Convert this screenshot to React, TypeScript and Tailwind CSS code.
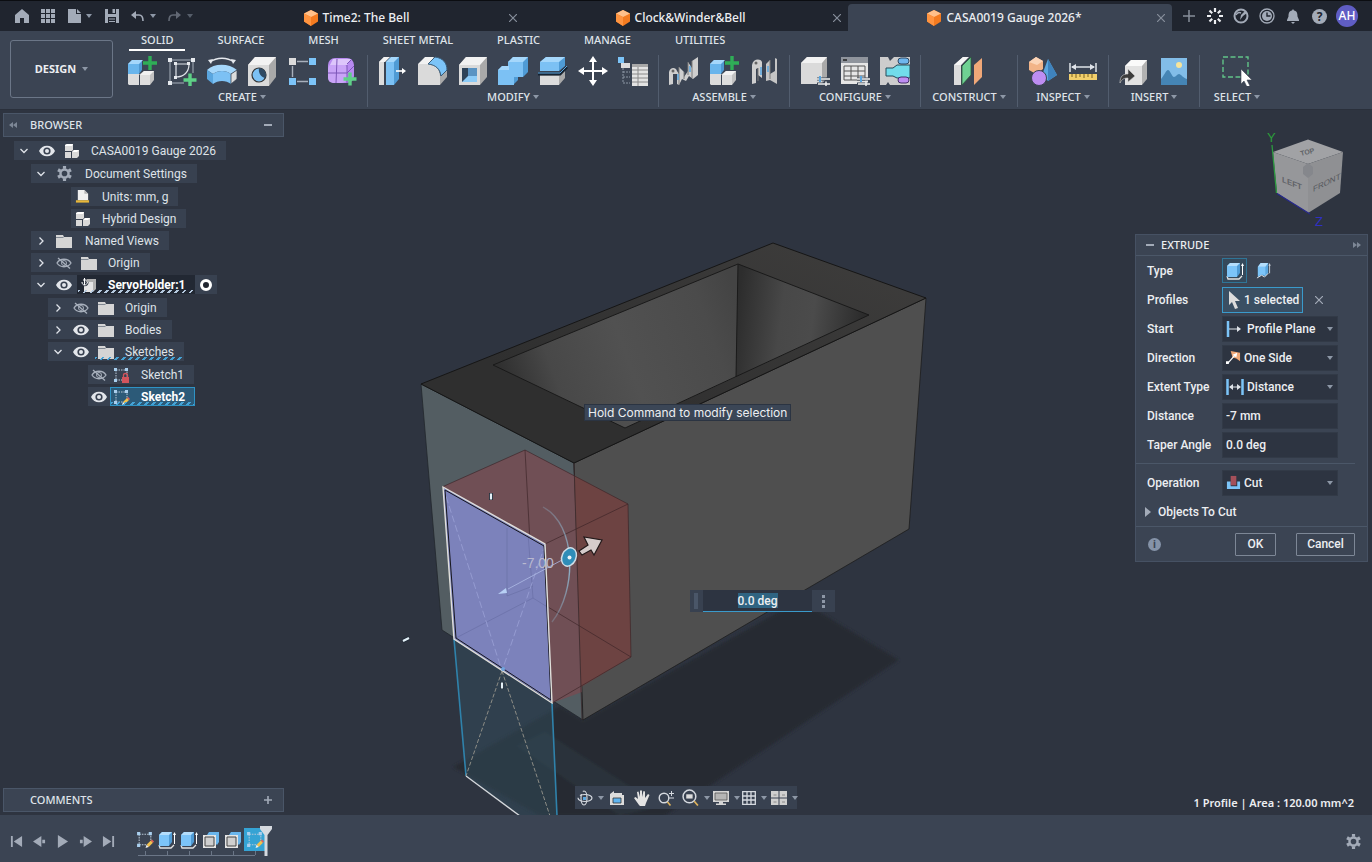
import React, { useState } from 'react';

type IconProps = { children: React.ReactNode; box?: string; className?: string };

const Svg: React.FC<IconProps> = ({ children, box = '0 0 30 30', className = 'w-[30px] h-[30px]' }) => (
  <svg viewBox={box} className={`shrink-0 ${className}`} fill="none" aria-hidden="true">
    {children}
  </svg>
);

const Caret: React.FC<{ className?: string }> = ({ className = '' }) => (
  <Svg box="0 0 6 4" className={`w-[6px] h-[4px] ${className}`}>
    <path d="M0 0h6L3 4z" fill="#8d97a6" />
  </Svg>
);

const Plus: React.FC<{ x: number; y: number; r?: number; color?: string }> = ({ x, y, r = 7, color = '#2fae57' }) => (
  <path d={`M${x - r} ${y}h${r * 2}M${x} ${y - r}v${r * 2}`} stroke={color} strokeWidth="3.4" />
);

/* ---------- ribbon icons ---------- */

const NewComponentIcon = () => (
  <Svg>
    <path d="M1 18h12v11H2l-1-1z" fill="#dcdcdc" />
    <path d="M13 18l4-3h10v9l-4 5H13z" fill="#c2c2c2" />
    <path d="M13 19h10v10H13z" fill="#dedede" />
    <path d="M13 19l4-4h10l-4 4z" fill="#f1f1f1" />
    <path d="M1 8l4-4h10v10l-3 4H1z" fill="#4e97d0" />
    <path d="M1 8h11v10H1z" fill="#69b5ec" />
    <path d="M1 8l4-4h11l-4 4z" fill="#a5d7fb" />
    <path d="M12.5 18.500v10.500" stroke="#3b4453" />
    <Plus x={23} y={7} />
  </Svg>
);

const SketchIcon = () => (
  <Svg>
    <path d="M3 4h23M3 4v23h14M26 4v13" stroke="#a8b0bc" />
    <path d="M9 8v14M9 8h14M22 8C22 16 17 21 9 21" stroke="#dfe3e9" strokeWidth="1.200" />
    <path d="M1 2h4v4H1zM24 2h4v4h-4zM1 25h4v4H1zM7 6h3v3H7zM20 6h3v3h-3zM7 20h3v3H7z" fill="#e6e9ee" />
    <Plus x={23} y={24} r={6.500} color="#5ed187" />
  </Svg>
);

const RevolveIcon = () => (
  <Svg>
    <path d="M3 6C10 1 20 1 27 6" stroke="#e6e9ee" strokeWidth="1.500" />
    <path d="M1 4l5-1-2 5zM29 4l-5-1 2 5z" fill="#e6e9ee" />
    <path d="M0 14C7 7 22 7 30 14l-6 4C19 14 11 14 6 18z" fill="#a5d7fb" />
    <path d="M0 14l6 4v10l-6-5z" fill="#5aa6df" />
    <path d="M6 18c5-4 13-4 18 0v10c-5-4-13-4-18 0z" fill="#7cc1f4" />
    <path d="M24 18l6-4v9l-6 5z" fill="#dcdcdc" stroke="#3b4453" strokeWidth=".8" />
  </Svg>
);

const HoleIcon = () => (
  <Svg>
    <path d="M1 9l7-8h21v20l-7 9H1z" fill="#a9a9a9" />
    <path d="M1 9l7-8h21l-7 8z" fill="#f2f2f2" />
    <path d="M1 9h21v21H1z" fill="#dadada" />
    <circle cx="12" cy="19" r="7" fill="#7cc1f4" stroke="#333" strokeWidth="1.200" />
    <path d="M12 12a7 7 0 0 1 7 7c0 1 0 2-1 3-4-1-7-5-6-10z" fill="#2f4a63" />
  </Svg>
);

const PatternIcon = () => (
  <Svg>
    <path d="M10 5.500h11M5.500 10v11M10 25.500h11" stroke="#a8b0bc" strokeWidth="1.400" />
    <path d="M2 2h7v7H2z" fill="#dcdcdc" />
    <path d="M22 2h7v7h-7zM2 22h7v7H2zM22 22h7v7h-7z" fill="#7cc4f8" />
  </Svg>
);

const FormIcon = () => (
  <Svg>
    <rect x="1" y="2" width="26" height="25" rx="7" fill="#b78af0" />
    <rect x="1" y="8" width="19" height="19" rx="5" fill="#c9a4f7" />
    <path d="M6 3h18l-4 6H3z" fill="#ddc6fb" />
    <path d="M10 3L9 27M1 17h19l7-7M20 9v18M20 8l5-5" stroke="#7c56b8" />
    <Plus x={23} y={23} r={6.500} color="#5ed187" />
  </Svg>
);

const PressPullIcon = () => (
  <Svg>
    <path d="M1 6l5-5h5l-5 5v23H1z" fill="#dcdcdc" />
    <path d="M1 6l5-5h6L7 6z" fill="#f3f3f3" />
    <path d="M8 6l5-5h8v22l-5 6H8z" fill="#4f9bd5" />
    <path d="M8 6h8v23H8z" fill="#7cc1f4" />
    <path d="M8 6l5-5h8l-5 5z" fill="#a5d7fb" />
    <path d="M18 15h7" stroke="#fff" strokeWidth="1.600" />
    <path d="M24 12l4 3-4 3z" fill="#fff" />
  </Svg>
);

const FilletIcon = () => (
  <Svg>
    <path d="M22 29l7-8V14L22 20z" fill="#a9a9a9" />
    <path d="M0 8l7-7h9L12 8z" fill="#f2f2f2" />
    <path d="M0 8h11c7 1 11 5 11 12v9H0z" fill="#dadada" />
    <path d="M10 8l7-7c8 1 12 6 12 13l-6 6C22 13 18 9 10 8z" fill="#7cc4f8" stroke="#3a5c78" />
  </Svg>
);

const ShellIcon = () => (
  <Svg>
    <path d="M1 9l7-8h21v20l-7 8H1z" fill="#a9a9a9" />
    <path d="M1 9l7-8h21l-7 8z" fill="#f2f2f2" />
    <path d="M1 9h21v20H1z" fill="#dadada" />
    <path d="M4 12h15v14H4z" fill="#2d4258" />
    <path d="M10 12h9v8h-9z" fill="#5a93c2" />
    <path d="M4 26l6-6h9v6z" fill="#8ccbf7" />
  </Svg>
);

const CombineIcon = () => (
  <Svg>
    <path d="M0 14l4-4h6V6l5-5h15v15l-5 5h-5v3l-5 5H0z" fill="#4f9bd5" />
    <path d="M0 14h10V6h15v15h-9v8H0z" fill="#7cc1f4" />
    <path d="M0 14l4-4h7v4zM10 6l5-5h15l-5 5z" fill="#a5d7fb" />
  </Svg>
);

const SplitIcon = () => (
  <Svg>
    <path d="M2 19h19l6-5v8l-6 7H2z" fill="#a9a9a9" />
    <path d="M2 20h19v9H2z" fill="#dcdcdc" />
    <path d="M0 18h22l7-7" stroke="#162230" strokeWidth="3" />
    <path d="M0 17h22l7-7" stroke="#5aa6df" />
    <path d="M2 6l6-5h19v9l-6 5H2z" fill="#4f9bd5" />
    <path d="M2 6h19v9H2z" fill="#7cc1f4" />
    <path d="M2 6l6-5h19l-6 5z" fill="#a5d7fb" />
  </Svg>
);

const MoveIcon = () => (
  <Svg>
    <path d="M15 3v24M3 15h24" stroke="#fff" strokeWidth="2" />
    <path d="M15 0l4 6h-8zM15 30l4-6h-8zM0 15l6-4v8zM30 15l-6-4v8z" fill="#fff" />
  </Svg>
);

const ParametersIcon = () => (
  <Svg>
    <path d="M0 1h6v6H0z" fill="#7cc4f8" />
    <path d="M3 7h5v5H3zM7 7h5v5H7z" fill="#dcdcdc" />
    <path d="M5 12v15M5 16h7M5 21h7M5 27h7" stroke="#8d97a6" strokeDasharray="2 1" />
    <path d="M14 8h16v22H14z" fill="#e3e3e3" />
    <path d="M14 8h16v3H14z" fill="#a8a8a8" />
    <path d="M14 14h16M14 18h16M14 22h16M14 26h16M20 11v19" stroke="#8a8a8a" />
  </Svg>
);

const JointIcon = () => (
  <Svg>
    <path d="M0 16c1-5 7-5 8-1l2 3V11l5 5v5l4-6V6l4 6V5l6-4v18l-5 4-4-3-3 5-4-2-3 6-2-1V18H4v10l-4 1z" fill="#cfcfcf" />
    <path d="M10 11v18M15 16v7M19 6v13M23 5v17" stroke="#7b7b7b" />
    <path d="M9 18v6M21 10v6" stroke="#5aa6df" strokeWidth="1.500" />
    <circle cx="4" cy="15" r="1.500" fill="#666" />
  </Svg>
);

const AsBuiltIcon = () => (
  <Svg>
    <path d="M3 9c1-6 8-7 10-3v16l-4-3V12l-2 1v14l-4 1z" fill="#cfcfcf" />
    <path d="M17 8l4-4v14l5-3V2l2 1v25l-7-4-4 1z" fill="#c5c5c5" />
    <path d="M9 12v13M21 4v19" stroke="#7b7b7b" />
    <path d="M12 11v8M19 10v6" stroke="#5aa6df" strokeWidth="1.500" />
    <circle cx="7" cy="7" r="1.500" fill="#666" />
  </Svg>
);

const ConfigureIcon = () => (
  <Svg>
    <path d="M1 7l6-6h20v20l-5 7H1z" fill="#a9a9a9" />
    <path d="M1 7l6-6h20l-5 6z" fill="#f2f2f2" />
    <path d="M1 7h21v21H1z" fill="#dadada" />
    <path d="M17 23h13M17 28h13" stroke="#3b4453" strokeWidth="3" />
    <path d="M17 23h13M18 28h12M26 25.500v5" stroke="#f1f1f1" strokeWidth="1.500" />
    <path d="M20 20v6" stroke="#5aa6df" strokeWidth="2" />
  </Svg>
);

const TableIcon = () => (
  <Svg>
    <path d="M1 1h27v27H1z" fill="#e6e6e6" />
    <path d="M1 1h27v6H1z" fill="#8f949c" />
    <path d="M3 4h4" stroke="#222" strokeWidth="1.500" />
    <path d="M4 10h21v14H4zM4 15h21M4 20h21M11 10v14M18 10v14" stroke="#555" />
    <path d="M17 23h13M17 28h13" stroke="#3b4453" strokeWidth="3" />
    <path d="M17 23h13M18 28h12M26 25.500v5" stroke="#f1f1f1" strokeWidth="1.500" />
    <path d="M21 20v6" stroke="#5aa6df" strokeWidth="2" />
  </Svg>
);

const RulesIcon = () => (
  <Svg>
    <path d="M0 1h8l2 4 4-4h16v28H10l-2-3-2 3H0z" fill="#cdcdcd" />
    <path d="M6 12h7l4-3h13v13H17l-4-2H6z" fill="#72dceb" stroke="#274a58" />
    <rect x="18" y="2" width="11" height="6" rx="3" fill="#6fb6ee" stroke="#2b4763" />
    <rect x="18" y="21" width="11" height="6" rx="3" fill="#bd8df2" stroke="#47306b" />
  </Svg>
);

const PlaneIcon = () => (
  <Svg>
    <path d="M0 9L9 1h5L7 9v20H0z" fill="#dcdcdc" />
    <path d="M0 9L9 1h6L7 9z" fill="#f5f5f5" />
    <path d="M8 10l9-9v18L8 29z" fill="#6fd193" stroke="#2c5a3c" strokeWidth=".8" />
    <path d="M20 9l8-7v19l-8 8z" fill="#f0a878" />
  </Svg>
);

const InspectIcon = () => (
  <Svg>
    <path d="M1 6l7-5 7 4v8l-7 5-7-4z" fill="#f2b488" />
    <path d="M1 6l7-5 7 4-6 4z" fill="#fbd5b8" />
    <path d="M20 3l9 16-9 6-6-6z" fill="#5aa6df" />
    <path d="M20 3l9 16-9 6z" fill="#3f83bd" />
    <circle cx="11" cy="22" r="7.500" fill="#bd8df2" stroke="#3b4453" />
  </Svg>
);

const MeasureIcon = () => (
  <Svg>
    <path d="M2 7v9M28 7v9M4 11h22" stroke="#dfe3e9" strokeWidth="1.500" />
    <path d="M3 11l5-3v6zM27 11l-5-3v6z" fill="#dfe3e9" />
    <path d="M1 18h28v6H1z" fill="#f2cf6b" />
    <path d="M4 18v3M8 18v4M12 18v3M16 18v4M20 18v3M24 18v4" stroke="#7a6020" />
  </Svg>
);

const InsertIcon = () => (
  <Svg>
    <path d="M6 10l6-6h16v19l-5 6H6z" fill="#b2b2b2" />
    <path d="M6 10l6-6h16l-5 6z" fill="#fafafa" />
    <path d="M6 10h17v19H6z" fill="#e2e2e2" />
    <path d="M1 27c0-7 3-9 8-9v-5l7 7-7 6v-4c-4 0-6 1-8 5z" fill="#3c3c3c" stroke="#ccc" strokeWidth=".6" />
  </Svg>
);

const ImageIcon = () => (
  <Svg>
    <path d="M2 2h26v27H2z" fill="#82bde8" />
    <circle cx="20" cy="9" r="3" fill="#f7e49a" />
    <path d="M2 23c3-3 5-9 7-9s4 7 6 7 3-3 5-3 4 4 8 5v6H2z" fill="#4585b5" />
  </Svg>
);

const SelectIcon = () => (
  <Svg>
    <path d="M1 1h25v20H1z" stroke="#62c489" strokeWidth="1.400" strokeDasharray="5 2.500" />
    <path d="M19 13v15l3-3 3 6 3-1-3-6h5z" fill="#fff" stroke="#3b4453" strokeWidth=".6" />
  </Svg>
);

/* ---------- small icons ---------- */

const Chevron: React.FC<{ open: boolean }> = ({ open }) => (
  <Svg box="0 0 10 10" className="w-[10px] h-[10px]">
    <path d={open ? 'M1.500 3L5 6.500 8.500 3' : 'M3.500 1.500L7 5 3.500 8.500'} stroke="#dfe3e9" strokeWidth="1.300" />
  </Svg>
);

const Eye: React.FC<{ off?: boolean }> = ({ off }) => (
  <Svg box="0 0 16 12" className="w-[16px] h-[12px]">
    {off ? (
      <>
        <path d="M1 6c3-5 11-5 14 0-3 5-11 5-14 0z" stroke="#a8b0bc" strokeWidth="1.300" />
        <circle cx="8" cy="6" r="2.500" stroke="#a8b0bc" />
        <path d="M2 1l12 10.500" stroke="#a8b0bc" strokeWidth="1.300" />
      </>
    ) : (
      <>
        <path d="M0 6c3-7 13-7 16 0-3 7-13 7-16 0z" fill="#e3e6eb" />
        <circle cx="8" cy="6" r="3.600" fill="#384150" />
        <circle cx="8" cy="6" r="2" fill="#e3e6eb" />
      </>
    )}
  </Svg>
);

const Folder = () => (
  <Svg box="0 0 16 14" className="w-[16px] h-[14px]">
    <path d="M0 1h7l1 2h8v11H0z" fill="#d5d5d5" />
    <path d="M0 3.500h7.500" stroke="#6b7380" strokeWidth=".8" />
  </Svg>
);

const Assembly = () => (
  <Svg box="0 0 16 16" className="w-[16px] h-[16px]">
    <path d="M1 2l2-1h6v6l-1 1H1zM1 9h6v6H1zM8 9l2-2h5v6l-2 2H8z" fill="#d9d9d9" />
    <path d="M1 2l2-1h6L8 3H1zM8 9l2-2h5l-2 2z" fill="#fff" />
  </Svg>
);

const Gear: React.FC<{ className?: string }> = ({ className = 'w-[15px] h-[15px]' }) => (
  <Svg box="0 0 16 16" className={className}>
    <circle cx="8" cy="8" r="4.300" stroke="#a3abb8" strokeWidth="2.600" />
    <path
      d="M8 0v3M8 13v3M1.100 4l2.600 1.500M12.300 10.500l2.600 1.500M1.100 12l2.600-1.500M12.300 5.500L14.900 4"
      stroke="#a3abb8"
      strokeWidth="3.400"
    />
  </Svg>
);

const UnitsIcon = () => (
  <Svg box="0 0 16 16" className="w-[15px] h-[15px]">
    <path d="M3 1h7l4 4v7H3z" fill="#f0f0f0" />
    <path d="M10 1l4 4h-4z" fill="#b5b5b5" />
    <path d="M1 12h14v2.500H1z" fill="#e9b83a" />
  </Svg>
);

const AnchorCube = () => (
  <Svg box="0 0 16 16" className="w-[16px] h-[16px]">
    <path d="M3 5l3-3h9v10l-3 3H3z" fill="#b0b0b0" />
    <path d="M3 5h9v10H3z" fill="#e5e5e5" />
    <path d="M3.500 1v7M1 5c0 4 5 4 5.500 0M2 3h3" stroke="#262d39" strokeWidth="2.400" />
    <path d="M3.500 1v7M1 5c0 4 5 4 5.500 0M2 3h3" stroke="#fff" />
  </Svg>
);

const SketchNode: React.FC<{ locked?: boolean; className?: string }> = ({ locked, className = 'w-[17px] h-[16px]' }) => (
  <Svg box="0 0 17 16" className={className}>
    <path d="M3 3h11v7M3 3v10h7" stroke="#b9c8d6" strokeDasharray="1.500 1" />
    <path d="M1 1h3v3H1zM12 1h3v3h-3zM1 12h3v3H1z" fill="#a9cfee" />
    {locked ? (
      <>
        <path d="M9 10h7v6H9z" fill="#d4545c" />
        <path d="M10.500 10V8c0-2 4-2 4 0v2" stroke="#d4545c" strokeWidth="1.300" />
      </>
    ) : (
      <>
        <path d="M10 13l4-4 2 2-4 4z" fill="#f2c14e" />
        <path d="M14 9l1-1 2 2-1 1z" fill="#e0605a" />
        <path d="M9 16l1-3 2 2z" fill="#f4f4f4" />
      </>
    )}
  </Svg>
);

const ExtrudeIcon: React.FC<{ className?: string }> = ({ className = 'w-[18px] h-[18px]' }) => (
  <Svg box="0 0 18 18" className={className}>
    <path d="M1 14l1 3h11l3-3" stroke="#e3e3e3" strokeWidth="1.300" />
    <path d="M1 4l3-3h10v10l-3 4H1z" fill="#4f9bd5" />
    <path d="M1 4h10v11H1z" fill="#7cc4f8" />
    <path d="M1 4l3-3h10l-3 3z" fill="#b4defc" />
    <path d="M16.500 3v10" stroke="#fff" />
    <path d="M15 4l1.500-3L18 4z" fill="#fff" />
  </Svg>
);

const ThinExtrudeIcon = () => (
  <Svg box="0 0 16 18" className="w-[15px] h-[17px]">
    <path d="M2 5l3-4h8v11l-3 3-4-1-3 2H2z" fill="#5aa6df" />
    <path d="M2 5h8v9l-4-1-4 2z" fill="#7cc4f8" />
    <path d="M2 5l3-4h8l-3 4z" fill="#b4defc" />
    <path d="M1 17l5-3 3 2 4-4" stroke="#e3e3e3" />
    <path d="M14.500 3v9" stroke="#cfd5dc" />
    <path d="M13.300 4l1.200-3L15.700 4z" fill="#cfd5dc" />
  </Svg>
);

const ShellNode = () => (
  <Svg box="0 0 18 18" className="w-[18px] h-[18px]">
    <path d="M5 4l2-3h10v10l-2 3z" fill="#69b5ec" />
    <path d="M1 4h13v13H1z" fill="#e5e5e5" />
    <path d="M3 6h9v9H3z" fill="#cfcfcf" stroke="#444" />
  </Svg>
);

const DocCube = () => (
  <Svg box="0 0 14 16" className="w-[14px] h-[16px]">
    <path d="M7 0l7 3.500v8L7 16l-7-4.500v-8z" fill="#f47b20" />
    <path d="M7 0l7 3.500L7 7 0 3.500z" fill="#ffc08a" />
    <path d="M0 3.500L7 7v9l-7-4.500z" fill="#ff9440" />
  </Svg>
);

/* ---------- title bar ---------- */

const documents = [
  { name: 'Time2: The Bell', active: false },
  { name: 'Clock&Winder&Bell', active: false },
  { name: 'CASA0019 Gauge 2026*', active: true },
];

const iconButton = 'w-[26px] h-full flex items-center justify-center';

const TitleBar = () => (
  <header className="h-[31px] flex bg-[#20252f] border-t border-[#0b0d11]">
    <div className="w-[200px] shrink-0 flex items-center pl-[9px]">
      <button aria-label="Home" className={iconButton}>
        <Svg box="0 0 14 14" className="w-[14px] h-[14px]">
          <path d="M7 0l7 6v8H9V9H5v5H0V6z" fill="#a3abb8" />
        </Svg>
      </button>
      <button aria-label="Data panel" className={iconButton}>
        <Svg box="0 0 14 14" className="w-[14px] h-[14px]">
          <path d="M0 0h4v4H0zM5 0h4v4H5zM10 0h4v4h-4zM0 5h4v4H0zM5 5h4v4H5zM10 5h4v4h-4zM0 10h4v4H0zM5 10h4v4H5zM10 10h4v4h-4z" fill="#a3abb8" />
        </Svg>
      </button>
      <button aria-label="File" className="w-[38px] h-full flex items-center justify-center gap-[5px]">
        <Svg box="0 0 13 14" className="w-[13px] h-[14px]">
          <path d="M0 0h8v5h5v9H0zM9 0l4 4H9z" fill="#a3abb8" />
        </Svg>
        <Caret />
      </button>
      <button aria-label="Save" className={iconButton}>
        <Svg box="0 0 14 14" className="w-[14px] h-[14px]">
          <path d="M0 0h14v14H0z" fill="#a3abb8" />
          <path d="M3 0h8v5H3zM3 8h8v6H3z" fill="#20252f" />
          <path d="M7.500 0h2.500v4H7.500zM4 9.500h6v1H4zM4 12h6v1H4z" fill="#a3abb8" />
        </Svg>
      </button>
      <button aria-label="Undo" className="w-[37px] h-full flex items-center justify-center gap-[6px]">
        <Svg box="0 0 13 11" className="w-[13px] h-[11px]">
          <path d="M2 4h6c3 0 4 2 4 6" stroke="#a3abb8" strokeWidth="1.600" />
          <path d="M5 0L0 4l5 4z" fill="#a3abb8" />
        </Svg>
        <Caret />
      </button>
      <button aria-label="Redo" className="w-[36px] h-full flex items-center justify-center gap-[6px] opacity-50">
        <Svg box="0 0 13 11" className="w-[13px] h-[11px]">
          <path d="M11 4H5C2 4 1 6 1 10" stroke="#a3abb8" strokeWidth="1.600" />
          <path d="M8 0l5 4-5 4z" fill="#a3abb8" />
        </Svg>
        <Caret />
      </button>
    </div>
    <div className="flex-1 flex pt-[3px]">
      {documents.map((doc) => (
        <div
          key={doc.name}
          className={`flex-1 flex items-center pl-2 pr-[3px] rounded-t-sm ${doc.active ? 'bg-[#3b4453]' : ''}`}
        >
          <div className="flex-1 flex items-center justify-center gap-[5px] text-[12px] font-medium text-[#eceef1] whitespace-nowrap">
            <DocCube />
            {doc.name}
          </div>
          <button aria-label={`Close ${doc.name}`} className="w-[16px] flex justify-center">
            <Svg box="0 0 8 8" className="w-[8px] h-[8px]">
              <path d="M0 0l8 8M8 0L0 8" stroke="#868e9b" strokeWidth="1.200" />
            </Svg>
          </button>
        </div>
      ))}
    </div>
    <div className="w-[200px] shrink-0 flex items-center pl-1">
      <button aria-label="New tab" className={iconButton}>
        <Svg box="0 0 12 12" className="w-[12px] h-[12px]">
          <path d="M6 0v12M0 6h12" stroke="#868e9b" strokeWidth="1.500" />
        </Svg>
      </button>
      <button aria-label="Assistant" className={iconButton}>
        <Svg box="0 0 16 16" className="w-[16px] h-[16px]">
          <path d="M8 0v4M8 12v4M0 8h4M12 8h4M2.500 2.500l2.700 2.700M10.800 10.800l2.700 2.700M13.500 2.500l-2.700 2.700M5.200 10.800l-2.700 2.700" stroke="#eceef1" strokeWidth="2.200" />
        </Svg>
      </button>
      <button aria-label="Extensions" className={iconButton}>
        <Svg box="0 0 16 16" className="w-[16px] h-[16px]">
          <circle cx="8" cy="8" r="6.500" stroke="#a3abb8" strokeWidth="2" />
          <path d="M7 12l1-5 4-4 2 2-4 3z" fill="#a3abb8" />
          <path d="M3 7c1-2 3-3 5-2" stroke="#a3abb8" strokeWidth="1.500" />
        </Svg>
      </button>
      <button aria-label="Job status" className={iconButton}>
        <Svg box="0 0 16 16" className="w-[16px] h-[16px]">
          <circle cx="8" cy="8" r="7" stroke="#a3abb8" strokeWidth="1.300" />
          <circle cx="8" cy="8" r="5" fill="#a3abb8" />
          <path d="M8 4.500V8h3.500" stroke="#20252f" strokeWidth="1.400" />
        </Svg>
      </button>
      <button aria-label="Notifications" className={iconButton}>
        <Svg box="0 0 12 15" className="w-[12px] h-[15px]">
          <path d="M6 0l1 1.500c3 .5 3.500 3 3.500 6L12 11v1H0v-1l1.500-3.500c0-3 .5-5.500 3.500-6zM4 13h4l-2 2z" fill="#a3abb8" />
        </Svg>
      </button>
      <button aria-label="Help" className="w-[27px] h-full flex items-center justify-center">
        <span className="w-[15px] h-[15px] rounded-full bg-[#a3abb8] text-[#20252f] text-[12px] leading-[15px] font-bold">?</span>
      </button>
      <button className="w-[22px] h-[22px] ml-[3px] rounded-full bg-[#5f5dc4] text-white text-[12px] font-medium leading-[22px] text-center">
        AH
      </button>
    </div>
  </header>
);

/* ---------- ribbon ---------- */

const ribbonTabs = ['SOLID', 'SURFACE', 'MESH', 'SHEET METAL', 'PLASTIC', 'MANAGE', 'UTILITIES'];

const ribbonGroups = [
  { name: 'CREATE', tools: [NewComponentIcon, SketchIcon, RevolveIcon, HoleIcon, PatternIcon, FormIcon] },
  { name: 'MODIFY', tools: [PressPullIcon, FilletIcon, ShellIcon, CombineIcon, SplitIcon, MoveIcon, ParametersIcon] },
  { name: 'ASSEMBLE', tools: [JointIcon, NewComponentIcon, AsBuiltIcon] },
  { name: 'CONFIGURE', tools: [ConfigureIcon, TableIcon, RulesIcon] },
  { name: 'CONSTRUCT', tools: [PlaneIcon] },
  { name: 'INSPECT', tools: [InspectIcon, MeasureIcon] },
  { name: 'INSERT', tools: [InsertIcon, ImageIcon] },
  { name: 'SELECT', tools: [SelectIcon] },
];

const Ribbon = () => {
  const [tab, setTab] = useState('SOLID');

  return (
    <div className="flex bg-[#3b4453] border-b border-[#2a303b] pb-[2px]">
      <button className="w-[103px] h-[58px] mt-[9px] ml-[10px] mr-[4px] shrink-0 rounded-[3px] border border-[#6b7687] flex items-center justify-center gap-[6px] text-[11px] font-bold text-[#eceef1]">
        DESIGN
        <Caret />
      </button>
      <div>
        <nav className="flex gap-[20px] pl-[12px]">
          {ribbonTabs.map((name) => (
            <button
              key={name}
              onClick={() => setTab(name)}
              className={`h-[20px] px-[12px] text-[11px] leading-[18px] font-medium text-[#dfe3e9] border-b-2 ${
                tab === name ? 'border-white' : 'border-transparent'
              }`}
            >
              {name}
            </button>
          ))}
        </nav>
        <div className="flex pt-[4px]">
          {ribbonGroups.map((group) => (
            <div
              key={group.name}
              className={`px-[5px] flex flex-col items-center ${group.name === 'SELECT' ? '' : 'border-r border-[#525d6e]'} ${
                group.name === 'CONSTRUCT' ? 'w-[97px]' : ''
              } ${group.name === 'SELECT' ? 'w-[74px]' : ''}`}
            >
              <div className="flex">
                {group.tools.map((Tool, i) => (
                  <button key={i} aria-label={`${group.name} ${i + 1}`} className="w-[40px] h-[32px] flex items-center justify-center">
                    <Tool />
                  </button>
                ))}
              </div>
              <button className="h-[20px] flex items-center gap-[3px] text-[11px] font-medium text-[#dfe3e9] whitespace-nowrap">
                {group.name}
                <Caret />
              </button>
            </div>
          ))}
        </div>
      </div>
    </div>
  );
};

/* ---------- browser tree ---------- */

interface TreeNode {
  label: string;
  icon: React.ReactNode;
  open?: boolean;
  visible?: boolean;
  state?: 'active' | 'changed' | 'selected';
  children?: TreeNode[];
}

const tree: TreeNode = {
  label: 'CASA0019 Gauge 2026',
  icon: <Assembly />,
  open: true,
  visible: true,
  children: [
    {
      label: 'Document Settings',
      icon: <Gear />,
      open: true,
      children: [
        { label: 'Units: mm, g', icon: <UnitsIcon /> },
        { label: 'Hybrid Design', icon: <Assembly /> },
      ],
    },
    { label: 'Named Views', icon: <Folder />, open: false },
    { label: 'Origin', icon: <Folder />, open: false, visible: false },
    {
      label: 'ServoHolder:1',
      icon: <AnchorCube />,
      open: true,
      visible: true,
      state: 'active',
      children: [
        { label: 'Origin', icon: <Folder />, open: false, visible: false },
        { label: 'Bodies', icon: <Folder />, open: false, visible: true },
        {
          label: 'Sketches',
          icon: <Folder />,
          open: true,
          visible: true,
          state: 'changed',
          children: [
            { label: 'Sketch1', icon: <SketchNode locked />, visible: false },
            { label: 'Sketch2', icon: <SketchNode />, visible: true, state: 'selected' },
          ],
        },
      ],
    },
  ],
};

const stateStyles = {
  active: 'bg-[#222833] font-bold text-white',
  changed: '',
  selected: 'bg-[#2c5a78] outline outline-1 -outline-offset-1 outline-[#2f93c4] font-bold text-white',
};

const stripeStyles = {
  active: 'bg-[repeating-linear-gradient(135deg,#b5c9de_0_2px,transparent_2px_5px)]',
  changed: 'bg-[repeating-linear-gradient(135deg,#45a3d6_0_2px,transparent_2px_5px)]',
  selected: 'bg-[repeating-linear-gradient(135deg,#45a3d6_0_2px,transparent_2px_5px)]',
};

const TreeItem: React.FC<{ node: TreeNode }> = ({ node }) => {
  const [open, setOpen] = useState(!!node.open);
  const [visible, setVisible] = useState(!!node.visible);
  const isLeaf = node.open === undefined;
  const hasEye = node.visible !== undefined;

  return (
    <li>
      <div className={`w-fit h-[19px] mb-[3px] flex items-center bg-[#384150] ${isLeaf ? 'ml-[23px]' : ''}`}>
        {!isLeaf && (
          <button aria-label={`Toggle ${node.label}`} onClick={() => setOpen(!open)} className="w-[20px] flex justify-center">
            <Chevron open={open} />
          </button>
        )}
        {hasEye && (
          <button
            aria-label={`Show ${node.label}`}
            onClick={() => setVisible(!visible)}
            className={`flex justify-center ${isLeaf ? 'w-[22px]' : 'w-[26px]'}`}
          >
            <Eye off={!visible} />
          </button>
        )}
        <div className={`relative h-full flex items-center pr-[10px] ${node.state ? stateStyles[node.state] : ''}`}>
          <span className={`flex justify-center mr-2 ${hasEye || isLeaf ? 'w-[23px]' : 'w-[26px]'}`}>{node.icon}</span>
          <span className="whitespace-nowrap">{node.label}</span>
          {node.state && <span className={`absolute inset-x-[1px] bottom-[1px] h-[3px] ${stripeStyles[node.state]}`} />}
        </div>
        {node.state === 'active' && (
          <input
            type="radio"
            aria-label="Active component"
            defaultChecked
            className="appearance-none w-[12px] h-[12px] mx-[5px] rounded-full border-[3px] border-white bg-[#20252f]"
          />
        )}
      </div>
      {node.children && open && (
        <ul className="pt-px pl-[17px]">
          {node.children.map((child) => (
            <TreeItem key={child.label} node={child} />
          ))}
        </ul>
      )}
    </li>
  );
};

const sidePanel = "h-[24px] flex items-center border border-[#4a5668] bg-[#3b4453] text-[11px] font-medium font-['Noto_Sans',sans-serif] text-[#dfe3e9]";

const Browser = () => (
  <section>
    <div className={sidePanel}>
      <button aria-label="Collapse browser" className="w-[26px] pl-[5px]">
        <Svg box="0 0 8 6" className="w-[8px] h-[6px]">
          <path d="M4 0v6L0 3zM8 0v6L4 3z" fill="#7d8796" />
        </Svg>
      </button>
      <h2 className="flex-1">BROWSER</h2>
      <button aria-label="Minimize browser" className="w-[30px] h-full flex items-center justify-center">
        <span className="w-[8px] h-[2px] bg-[#a3abb8]" />
      </button>
    </div>
    <ul className="pt-[4px] pl-[11px] text-[12px] text-[#dfe3e9]">
      <TreeItem node={tree} />
    </ul>
  </section>
);

const Comments = () => (
  <section className={sidePanel}>
    <h2 className="flex-1 pl-[26px]">COMMENTS</h2>
    <button aria-label="Add comment" className="w-[30px] h-full flex items-center justify-center">
      <Svg box="0 0 8 8" className="w-[8px] h-[8px]">
        <path d="M4 0v8M0 4h8" stroke="#a3abb8" strokeWidth="1.600" />
      </Svg>
    </button>
  </section>
);

/* ---------- scene ---------- */

const Scene = () => (
  <svg
    viewBox="0 110 1372 705"
    preserveAspectRatio="xMidYMid slice"
    className="absolute inset-0 w-full h-full font-['Liberation_Sans',sans-serif]"
    aria-label="Model"
  >
    <defs>
      <linearGradient id="top" x1="0" y1="1" x2="1" y2="0">
        <stop offset="0.3" stopColor="#2f2f2f" />
        <stop offset="1" stopColor="#3f3e3d" />
      </linearGradient>
      <linearGradient id="wallLeft" gradientUnits="userSpaceOnUse" x1="505" y1="385" x2="738" y2="300">
        <stop offset="0" stopColor="#2f2f2f" />
        <stop offset="0.200" stopColor="#484848" />
        <stop offset="0.500" stopColor="#515151" />
        <stop offset="0.850" stopColor="#4b4b4b" />
        <stop offset="1" stopColor="#444444" />
      </linearGradient>
      <linearGradient id="wallRight" gradientUnits="userSpaceOnUse" x1="736" y1="320" x2="862" y2="335">
        <stop offset="0" stopColor="#2d2d2d" />
        <stop offset="0.350" stopColor="#484848" />
        <stop offset="0.600" stopColor="#4b4b4b" />
        <stop offset="1" stopColor="#2b2b2b" />
      </linearGradient>
      <linearGradient id="arc" x1="0" y1="0" x2="0" y2="1">
        <stop offset="0" stopColor="#8fb4cc" stopOpacity=".3" />
        <stop offset="0.500" stopColor="#8fb4cc" />
        <stop offset="1" stopColor="#8fb4cc" stopOpacity=".3" />
      </linearGradient>
      <filter id="soft" x="-10%" y="-10%" width="120%" height="120%">
        <feGaussianBlur stdDeviation="1.500" />
      </filter>
    </defs>

    {/* ground shadow */}
    <g filter="url(#soft)">
      <path d="M453 767L560 706 583 720 800 600 899 660 665 816H540z" fill="#262a33" />
      <path d="M517 746L545 732 660 806 620 816z" fill="#2b303a" />
    </g>

    {/* body */}
    <path d="M421 384L574 463 583 720 442 630z" fill="#535d62" stroke="#22272c" strokeWidth=".8" />
    <path d="M574 463L926 298 909 529 583 720z" fill="#4f4f4f" stroke="#1d1d1d" strokeWidth=".8" />
    <path d="M421 384L773 243 926 298 574 463z" fill="url(#top)" stroke="#161616" />
    <path d="M493 365L738 264 736 377 625 428z" fill="url(#wallLeft)" />
    <path d="M738 264L869 315 736 377z" fill="url(#wallRight)" />
    <path d="M493 365L738 264 869 315 625 428zM738 264L736 377" stroke="#1a1a1a" fill="none" />

    {/* sketch plane below the profile */}
    <path d="M454 639L552 703 557 816H520L466 776z" fill="#34505f" fillOpacity=".45" />
    <path d="M454 639L466 776M552 703L557 816" stroke="#2f82ab" strokeWidth="1.600" />
    <path d="M466 776L520 816" stroke="#d5d8dc" strokeWidth="1.300" />
    <path d="M502 671L466 776M502 671L550 816" stroke="#8d8d86" strokeDasharray="4 2" />

    {/* cut volume */}
    <path d="M442 487L525 450 574 475.500 582 692 552 703 545 544z" fill="#704f55" />
    <path d="M574 475.500L628 504 631 657 581 687z" fill="#6d4342" />
    <path d="M442 487L525 450 628 504 631 657 552 703M545 544L628 504M525 450L533 598 631 657" stroke="#3a2226" strokeOpacity=".8" strokeWidth=".8" fill="none" />
    <path d="M574 463L582 720" stroke="#39292c" strokeWidth=".8" />

    {/* profile */}
    <path d="M443 487L545 544 552 702 454 639z" fill="#7c82bb" />
    <path d="M507 528V596L533 586M454 639L533 598 549 608M533 598L528 534" stroke="#62689e" strokeWidth=".5" fill="none" />
    <path d="M443 487L502 671 545 545" stroke="#9aa1d6" strokeWidth=".8" strokeDasharray="7 3" fill="none" />
    <path d="M445 490L544 546 551 700 456 638z" stroke="#16161c" fill="none" />
    <path d="M443 487L545 544 552 703 454 639z" stroke="#e0dfda" strokeWidth="1.400" fill="none" />
    <circle cx="503" cy="669" r="2" fill="#6fa3dd" />

    {/* taper manipulator */}
    <path d="M543 507C577 525 577 590 552 622" stroke="url(#arc)" strokeWidth="1.400" fill="none" />
    <path d="M562 560L508 589" stroke="#aebbe6" strokeWidth=".8" />
    <path d="M498 594l8-6 1 5z" fill="#b8d0f5" />
    <text x="522" y="568" fontSize="14" fill="#b9b9d0">-7.00</text>
    <path d="M579 551L588 545 584 537 602 540 594 555 591 550 582 555z" fill="#d6cccb" stroke="#22191a" strokeWidth="1.200" />
    <g transform="rotate(24 569 557)">
      <ellipse cx="569" cy="557" rx="7" ry="9.500" fill="#2f8db8" stroke="#cfdde6" strokeWidth="1.500" />
    </g>
    <circle cx="569.500" cy="557.500" r="2" fill="#e9f4fa" />

    {/* constraint glyphs */}
    <path d="M491 493v7M502 682v7M403 641l6-3" stroke="#1f2a36" strokeWidth="4" />
    <path d="M491 493.500v6M502 682.500v6M403 641l6-3" stroke="#e4f1f8" strokeWidth="2.200" />
  </svg>
);

const ViewCube = () => (
  <svg viewBox="1262 128 90 104" className="relative w-[90px] h-[104px] mr-[16px] font-['Liberation_Sans',sans-serif]" aria-label="View cube">
    <path d="M1308 139.500L1343 152 1308 164 1273 152z" fill="#a1a2a5" />
    <path d="M1273 152L1308 164V213L1277 193z" fill="#96979a" />
    <path d="M1308 164L1343 152 1340 193 1308 213z" fill="#8f9093" />
    <path d="M1303 167l5-4 5 4v7l-5 4-5-4z" fill="#85878c" />
    <path d="M1272 145L1276.500 193" stroke="#2c9b3f" strokeWidth="1.300" />
    <path d="M1277 193.500L1310 214" stroke="#26288c" strokeWidth="1.300" />
    <text x="1267" y="142" fontSize="13" fill="#2b9f3a">Y</text>
    <text x="1315" y="226" fontSize="13" fill="#3030c4">Z</text>
    <text transform="translate(1301 156) rotate(-14)" fontSize="7" fontWeight="bold" fill="#606267">TOP</text>
    <text transform="translate(1282 182) skewY(22)" fontSize="8" fontWeight="bold" fill="#606267">LEFT</text>
    <text transform="translate(1313 192) skewY(-26)" fontSize="8" fill="#55575c">FRONT</text>
  </svg>
);

/* ---------- extrude dialog ---------- */

const fieldBox = 'w-[116px] h-[26px] flex items-center bg-[#2d3441] border border-[#323a47]';

const Row: React.FC<{ label: string; id?: string; children: React.ReactNode }> = ({ label, id, children }) => (
  <div className="h-[29px] flex items-center pl-[11px]">
    <label htmlFor={id} className="w-[75px]">{label}</label>
    {children}
  </div>
);

const SelectRow: React.FC<{ label: string; id: string; value: string; icon: React.ReactNode }> = ({ label, id, value, icon }) => (
  <Row label={label} id={id}>
    <div className={`${fieldBox} pl-[3px] pr-[4px] gap-[3px]`}>
      {icon}
      <select id={id} defaultValue={value} className="appearance-none flex-1 min-w-0 bg-transparent outline-none">
        <option>{value}</option>
      </select>
      <Caret />
    </div>
  </Row>
);

const ExtrudePanel = () => {
  const [distance, setDistance] = useState('-7 mm');
  const [taper, setTaper] = useState('0.0 deg');

  return (
    <form
      onSubmit={(e) => e.preventDefault()}
      className="relative w-[233px] mt-[2px] bg-[#3b4453] border border-[#465163] text-[12px] font-medium text-[#eceef1]"
    >
      <div className="h-[21px] flex items-center px-[10px] border-b border-[#4b5768]">
        <span className="w-[8px] h-[2px] mr-[7px] bg-[#a3abb8]" />
        <h2 className="flex-1 text-[11px] font-['Noto_Sans',sans-serif]">EXTRUDE</h2>
        <Svg box="0 0 8 6" className="w-[8px] h-[6px] -mr-1">
          <path d="M0 0l4 3-4 3zM4 0l4 3-4 3z" fill="#7d8796" />
        </Svg>
      </div>
      <div>
        <Row label="Type">
          <button aria-label="Extrude" className="w-[25px] h-[25px] flex items-center justify-center border border-[#2f7597] bg-[#35495b]">
            <ExtrudeIcon />
          </button>
          <button aria-label="Thin extrude" className="w-[28px] h-[25px] ml-[2px] flex items-center justify-center">
            <ThinExtrudeIcon />
          </button>
        </Row>
        <Row label="Profiles">
          <button className="w-[81px] h-[26px] flex items-center pl-[5px] gap-[4px] border border-[#3a9acb] bg-[#3a4f63] whitespace-nowrap">
            <Svg box="0 0 12 18" className="w-[12px] h-[18px]">
              <path d="M1 0v14l3-3 3 7 3-1-3-7h5z" fill="#dcdcdc" />
            </Svg>
            1 selected
          </button>
          <button aria-label="Clear selection" className="w-[32px] flex justify-center">
            <Svg box="0 0 8 8" className="w-[8px] h-[8px]">
              <path d="M0 0l8 8M8 0L0 8" stroke="#a3abb8" strokeWidth="1.200" />
            </Svg>
          </button>
        </Row>
        <SelectRow
          label="Start"
          id="start"
          value="Profile Plane"
          icon={
            <Svg box="0 0 18 16" className="w-[18px] h-[16px]">
              <path d="M2 0v16" stroke="#7cc4f8" strokeWidth="2.500" />
              <path d="M3 8h10" stroke="#dfe3e9" />
              <path d="M11 5l4 3-4 3z" fill="#dfe3e9" />
            </Svg>
          }
        />
        <SelectRow
          label="Direction"
          id="direction"
          value="One Side"
          icon={
            <Svg box="0 0 16 16" className="w-[15px] h-[15px]">
              <path d="M5 1l10 2v9l-4-3-4-1z" fill="#f0a878" />
              <path d="M2 14l8-9" stroke="#fff" strokeWidth="1.300" />
              <path d="M0 12h3v3H0zM7 5l5-2-1 5z" fill="#fff" />
            </Svg>
          }
        />
        <SelectRow
          label="Extent Type"
          id="extent"
          value="Distance"
          icon={
            <Svg box="0 0 18 16" className="w-[18px] h-[16px]">
              <path d="M1.500 0v16M16.500 0v16" stroke="#7cc4f8" strokeWidth="2.500" />
              <path d="M4 8h10" stroke="#dfe3e9" />
              <path d="M3 8l4-3v6zM15 8l-4-3v6z" fill="#dfe3e9" />
            </Svg>
          }
        />
        <Row label="Distance" id="distance">
          <input id="distance" value={distance} onChange={(e) => setDistance(e.target.value)} className={`${fieldBox} px-[3px] outline-none`} />
        </Row>
        <Row label="Taper Angle" id="taper">
          <input id="taper" value={taper} onChange={(e) => setTaper(e.target.value)} className={`${fieldBox} px-[3px] outline-none`} />
        </Row>
        <hr className="mt-[4px] mb-[4px] mr-[12px] border-[#4b5768]" />
        <SelectRow
          label="Operation"
          id="operation"
          value="Cut"
          icon={
            <Svg box="0 0 16 16" className="w-[15px] h-[15px]">
              <path d="M1 7h4v5h7V7h3v8H1z" fill="#7cc4f8" />
              <path d="M5 1h6v10H5z" fill="#a4505a" />
            </Svg>
          }
        />
        <button className="h-[29px] flex items-center pl-[9px] gap-[7px]">
          <Svg box="0 0 6 10" className="w-[6px] h-[10px]">
            <path d="M0 0l6 5-6 5z" fill="#a3abb8" />
          </Svg>
          Objects To Cut
        </button>
      </div>
      <div className="h-[35px] flex items-center pl-[12px] pr-[12px] border-t border-[#4b5768]">
        <div className="flex-1">
          <div className="w-[13px] h-[13px] rounded-full bg-[#8593a8] text-[#3b4453] text-[11px] leading-[13px] text-center font-bold">i</div>
        </div>
        <button type="submit" className="w-[41px] h-[23px] mr-[20px] border border-[#7d8796] rounded-[1px]">OK</button>
        <button type="button" className="w-[59px] h-[23px] border border-[#7d8796] rounded-[1px]">Cancel</button>
      </div>
    </form>
  );
};

/* ---------- navigation bar ---------- */

const NavBar = () => (
  <div className="relative h-[23px] flex items-center bg-[#384150] px-[2px] [&>button]:h-full [&>button]:flex [&>button]:items-center [&>button]:gap-[5px]">
    <button aria-label="Orbit" className="w-[32px]">
      <Svg box="0 0 16 16" className="w-[16px] h-[16px]">
        <ellipse cx="8" cy="8" rx="7" ry="3.500" stroke="#d5d9df" strokeWidth="1.200" strokeDasharray="17 3" />
        <ellipse cx="7" cy="8" rx="3" ry="7" stroke="#d5d9df" strokeWidth="1.200" strokeDasharray="20 3" />
        <path d="M6 7h3v3H6z" fill="#5aa6df" />
      </Svg>
      <Caret />
    </button>
    <button aria-label="Look at" className="w-[25px]">
      <Svg box="0 0 16 16" className="w-[16px] h-[16px]">
        <path d="M1 4l4-3v2h8v2h2v10H1z" fill="#dcdcdc" />
        <path d="M4 8h8v5H4z" fill="#5fb4f0" stroke="#333" strokeWidth=".8" />
      </Svg>
    </button>
    <button aria-label="Pan" className="w-[24px]">
      <Svg box="0 0 16 16" className="w-[16px] h-[16px]">
        <path d="M5 15L0 8l1.500-1L4 9 3 2l1.500-.5L6 7V.5h2V7l1.500-6 1.500.5L11 8l3-4 1.500 1-3.500 8-1 3H6z" fill="#e3e3e3" />
      </Svg>
    </button>
    <button aria-label="Zoom" className="w-[24px]">
      <Svg box="0 0 18 16" className="w-[18px] h-[16px]">
        <circle cx="6" cy="8" r="4.800" stroke="#d5d9df" strokeWidth="1.400" />
        <path d="M9.500 12l3 3.500" stroke="#e0b45c" strokeWidth="1.600" />
        <path d="M11 3.500h5M13.500 1v5M11 8h5" stroke="#d5d9df" />
      </Svg>
    </button>
    <button aria-label="Fit" className="w-[31px]">
      <Svg box="0 0 16 16" className="w-[17px] h-[17px]">
        <circle cx="7" cy="7" r="6" stroke="#d5d9df" strokeWidth="1.400" />
        <path d="M4 5h6v4H4z" fill="#dcdcdc" />
        <path d="M11.500 11.500l3.500 4" stroke="#e0b45c" strokeWidth="1.600" />
      </Svg>
      <Caret />
    </button>
    <button aria-label="Display settings" className="w-[29px]">
      <Svg box="0 0 16 14" className="w-[16px] h-[14px]">
        <path d="M0 0h16v11H0z" fill="#d5d5d5" />
        <path d="M2 2h12v7H2z" fill="#b5b5b5" stroke="#555" strokeWidth=".8" />
        <path d="M6 11h4v1.500h3V14H3v-1.500h3z" fill="#d5d5d5" />
      </Svg>
      <Caret />
    </button>
    <button aria-label="Grid and snaps" className="w-[29px]">
      <Svg box="0 0 14 14" className="w-[14px] h-[14px]">
        <path d="M.7.700h12.600v12.600H.7zM5 0v14M9 0v14M0 5h14M0 9h14" stroke="#d5d9df" strokeWidth="1.300" />
      </Svg>
      <Caret />
    </button>
    <button aria-label="Viewports" className="w-[24px]">
      <Svg box="0 0 16 14" className="w-[16px] h-[14px]">
        <path d="M0 0h7.500v6.500H0zM8.500 0H16v6.500H8.500zM0 7.500h7.500V14H0zM8.500 7.500H16V14H8.500z" fill="#cfcfcf" />
        <path d="M2.500 4h3M11 4h3M2.500 11h3M11 11h3" stroke="#8a8a8a" />
      </Svg>
      <Caret />
    </button>
  </div>
);

/* ---------- timeline ---------- */

const playback = [
  { name: 'First', path: 'M0 1h2v12H0zM12 1v12L3 7z' },
  { name: 'Back', path: 'M8 1v12L-1 7zM9 5h3v4H9z' },
  { name: 'Play', path: 'M1 0l11 7-11 7z' },
  { name: 'Forward', path: 'M4 1v12l9-6zM0 5h3v4H0z' },
  { name: 'Last', path: 'M10 1h2v12h-2zM0 1v12l9-6z' },
];

const features = [
  <SketchNode className="w-[18px] h-[17px]" />,
  <ExtrudeIcon />,
  <ExtrudeIcon />,
  <ShellNode />,
  <ShellNode />,
  <SketchNode className="w-[18px] h-[17px]" />,
];

const railStyle = (i: number) => {
  if (i === 0) return 'w-[18px] self-end';
  return i === features.length - 1 ? 'w-[11px] self-start' : 'w-[22px]';
};

const Timeline = () => (
  <footer className="h-[47px] flex items-start bg-[#3b4453]">
    <div className="flex pl-[5px] pt-[20px] w-[134px]">
      {playback.map((item) => (
        <button key={item.name} aria-label={item.name} className="w-[23px] flex justify-center">
          <Svg box="-1 0 14 14" className="w-[13px] h-[13px]">
            <path d={item.path} fill="#a3abb8" />
          </Svg>
        </button>
      ))}
    </div>
    <ol className="relative flex pt-[13px]">
      {features.map((icon, i) => (
        <li key={i} className="w-[22px] flex flex-col items-center">
          <button
            aria-label={`Feature ${i + 1}`}
            className={`w-[22px] h-[23px] flex items-center justify-center ${i === features.length - 1 ? 'bg-[#35a3d4]' : ''}`}
          >
            {icon}
          </button>
          <span className="w-px h-[4px] bg-[#6b7687]" />
          <span className={`h-px bg-[#6b7687] ${railStyle(i)}`} />
        </li>
      ))}
      <li className="absolute left-full -ml-[6px] top-[11px]">
        <Svg box="0 0 12 30" className="w-[12px] h-[30px]">
          <path d="M0 0h12v3L7.500 9v21h-3V9L0 3z" fill="#d5d9df" />
        </Svg>
      </li>
    </ol>
    <button aria-label="Timeline settings" className="ml-auto mr-[11px] mt-[19px]">
      <Gear />
    </button>
  </footer>
);

const App: React.FC = () => {
  const [angle, setAngle] = useState('0.0 deg');

  return (
    <div className="min-h-screen flex flex-col bg-[#2e3440] text-[#eceef1] font-['Noto_Sans',sans-serif] select-none">
      <TitleBar />
      <Ribbon />
      <main className="relative flex-1 grid grid-cols-[1fr_auto_1fr] overflow-hidden font-['Roboto',sans-serif]">
        <Scene />
        <div className="relative w-[281px] ml-[3px] pt-[3px] pb-[3px] flex flex-col justify-between">
          <Browser />
          <Comments />
        </div>
        <div className="self-end pb-[6px]">
          <NavBar />
        </div>
        <div className="pt-[18px] pr-[4px] flex flex-col items-end">
          <ViewCube />
          <ExtrudePanel />
          <p className="relative mt-auto mb-[3px] mr-[14px] text-[11px] leading-[18px] font-semibold font-['Noto_Sans',sans-serif]">
            1 Profile | Area : 120.00 mm^2
          </p>
        </div>
        <div className="absolute left-[584px] top-[294px] h-[17px] px-[3px] bg-[#3b4656] border border-[#2b3442] text-[12px] leading-[15px] font-['Inter',sans-serif] whitespace-nowrap">
          Hold Command to modify selection
        </div>
        <div className="absolute left-[690px] top-[480px] w-[145px] h-[22px] flex items-stretch bg-[#384150] text-[12px] font-medium">
          <span className="w-[4px] my-[3px] ml-[4px] mr-[5px] bg-[#4a5668]" />
          <div className="relative w-[109px] flex items-center justify-center bg-[#2d3441] border-b border-[#3a9acb]">
            <span className="absolute w-[40px] h-[15px] bg-[#2f6482]" />
            <input
              aria-label="Taper angle"
              value={angle}
              onChange={(e) => setAngle(e.target.value)}
              className="relative w-full bg-transparent text-center outline-none"
            />
          </div>
          <button aria-label="More options" className="flex-1 flex items-center justify-center">
            <Svg box="0 0 3 13" className="w-[3px] h-[13px]">
              <path d="M0 0h3v3H0zM0 5h3v3H0zM0 10h3v3H0z" fill="#8d97a6" />
            </Svg>
          </button>
        </div>
      </main>
      <Timeline />
    </div>
  );
};

export default App;
